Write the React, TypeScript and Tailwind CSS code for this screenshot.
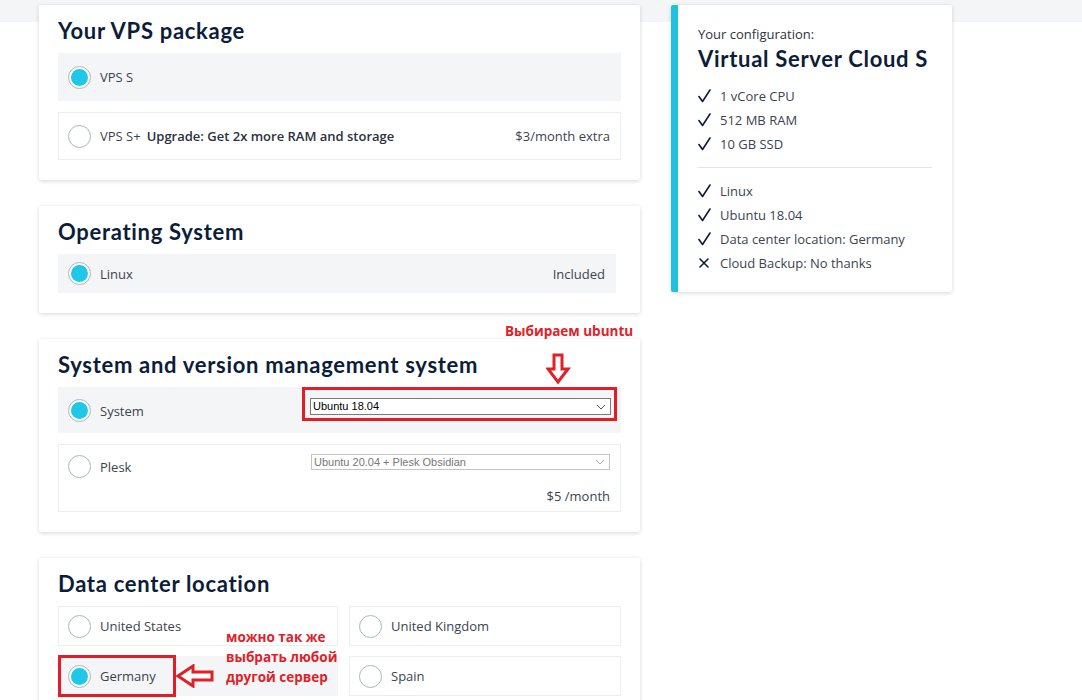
import React from "react";

type RadioProps = { checked?: boolean };

function Radio({ checked }: RadioProps) {
  return (
    <span className="flex h-[23px] w-[23px] shrink-0 items-center justify-center rounded-full border border-[#aab5c3] bg-white">
      {checked && <span className="h-[17px] w-[17px] rounded-full bg-[#1ec8e6]" />}
    </span>
  );
}

function Chevron({ color }: { color: string }) {
  return (
    <svg width="10" height="6" viewBox="0 0 10 6" fill="none">
      <path d="M1 1 L5 5 L9 1" stroke={color} strokeWidth="1" />
    </svg>
  );
}

function Check() {
  return (
    <svg width="13" height="14" viewBox="0 0 13 14" fill="none" className="shrink-0">
      <path d="M1 7.5 L4.5 12.5 L12 1" stroke="#0b1d3a" strokeWidth="1.6" strokeLinecap="round" strokeLinejoin="round" />
    </svg>
  );
}

function Cross() {
  return (
    <svg width="13" height="14" viewBox="0 0 13 14" fill="none" className="shrink-0">
      <path d="M2 3 L10 11 M10 3 L2 11" stroke="#0b1d3a" strokeWidth="1.6" strokeLinecap="round" />
    </svg>
  );
}

function Card({ title, children, className = "" }: { title: string; children: React.ReactNode; className?: string }) {
  return (
    <section className={`relative rounded-[2px] bg-white px-[19px] pt-[12px] pb-[20px] shadow-[0_1px_4px_rgba(0,0,0,0.16)] ${className}`}>
      <h2 className="h-[28px] font-['Lato',sans-serif] text-[22px] leading-[28px] font-bold tracking-[0.7px] text-[#0b1d3a]">{title}</h2>
      <div className="mt-[8px]">{children}</div>
    </section>
  );
}

const configMain = ["1 vCore CPU", "512 MB RAM", "10 GB SSD"];
const configExtra = ["Linux", "Ubuntu 18.04", "Data center location: Germany"];

export default function App() {
  return (
    <div className="min-h-[700px] bg-[linear-gradient(#f4f5f7_22px,#ffffff_22px)] font-['Open_Sans',sans-serif] text-[13px] text-[#3b4350]">
      <div className="flex items-start pt-[5px] pl-[39px]">
        {/* left column */}
        <div className="flex w-[601px] flex-col gap-[26px]">
          <Card title="Your VPS package">
            <div className="flex flex-col gap-[11px]">
              <div className="flex h-[48px] items-center gap-[9px] bg-[#f4f5f7] pl-[10px]">
                <Radio checked />
                <span className="pt-[2px]">VPS S</span>
              </div>
              <div className="flex h-[48px] items-center border border-[#eceef1] pr-[10px] pl-[9px]">
                <Radio />
                <span className="ml-[9px] pt-[2px]">VPS S+</span>
                <span className="ml-[6px] pt-[2px] font-semibold text-[#2a3140]">Upgrade: Get 2x more RAM and storage</span>
                <span className="ml-auto pt-[2px]">$3/month extra</span>
              </div>
            </div>
          </Card>

          <Card title="Operating System" className="pr-[24px]">
            <div className="flex h-[39px] items-center gap-[9px] bg-[#f4f5f7] pr-[11px] pl-[10px]">
              <Radio checked />
              <span className="pt-[2px]">Linux</span>
              <span className="ml-auto pt-[2px]">Included</span>
            </div>
          </Card>

          <Card title="System and version management system">
            <div className="flex flex-col gap-[11px]">
              <div className="relative flex h-[46px] bg-[#f4f5f7] pr-[10px] pl-[10px]">
                <div className="flex items-center gap-[9px] self-center pt-[1px]">
                  <Radio checked />
                  <span className="pt-[2px]">System</span>
                </div>
                <div className="mt-[11px] ml-auto flex h-[17px] w-[301px] items-center justify-between border border-[#7a7a7a] bg-white pr-[4px] pl-[2px] font-['Liberation_Sans',sans-serif] text-[11px] text-black">
                  <span>Ubuntu 18.04</span>
                  <Chevron color="#555" />
                </div>
                <div className="absolute top-0 left-[244px] h-[34px] w-[315px] border-[3px] border-[#e21d26]" />
              </div>
              <div className="flex h-[68px] flex-col border border-[#eceef1] pr-[10px] pl-[9px]">
                <div className="flex items-start">
                  <div className="mt-[10px] flex items-center gap-[9px]">
                    <Radio />
                    <span className="pt-[2px]">Plesk</span>
                  </div>
                  <div className="mt-[9px] ml-auto flex h-[16px] w-[299px] items-center justify-between border border-[#c4c4c4] bg-white pr-[4px] pl-[2px] font-['Liberation_Sans',sans-serif] text-[11px] text-[#777]">
                    <span>Ubuntu 20.04 + Plesk Obsidian</span>
                    <Chevron color="#aaa" />
                  </div>
                </div>
                <span className="mt-[9px] self-end">$5 /month</span>
              </div>
            </div>
            {/* annotation */}
            <div className="absolute top-[-17px] left-[466px] text-[13.5px] leading-[18px] font-bold whitespace-nowrap text-[#e02128]">
              Выбираем ubuntu
            </div>
            <svg className="absolute top-[14px] left-[507px]" width="26" height="32" viewBox="0 0 26 32" fill="none">
              <path d="M8 2 H16 V16 H22 L12 29 L2 16 H8 Z" fill="#fff" stroke="#e02128" strokeWidth="3" strokeLinejoin="miter" />
            </svg>
          </Card>

          <Card title="Data center location">
            <div className="relative grid grid-cols-[280px_1fr] gap-x-[11px] gap-y-[10px]">
              <div className="flex h-[40px] items-center gap-[9px] border border-[#eceef1] pl-[9px]">
                <Radio />
                <span className="pt-[2px]">United States</span>
              </div>
              <div className="flex h-[40px] items-center gap-[9px] border border-[#eceef1] pl-[9px]">
                <Radio />
                <span className="pt-[2px]">United Kingdom</span>
              </div>
              <div className="relative flex h-[40px] items-center gap-[9px] bg-[#f4f5f7] pl-[10px]">
                <Radio checked />
                <span className="pt-[2px]">Germany</span>
                <div className="absolute top-[-1px] left-0 h-[42px] w-[118px] border-[3px] border-[#e21d26]" />
              </div>
              <div className="flex h-[40px] items-center gap-[9px] border border-[#eceef1] pl-[9px]">
                <Radio />
                <span className="pt-[2px]">Spain</span>
              </div>
              {/* annotation */}
              <div className="absolute top-[21px] left-[168px] text-[13.5px] leading-[20px] font-bold text-[#e02128]">
                можно так же
                <br />
                выбрать любой
                <br />
                другой сервер
              </div>
              <svg className="absolute top-[58px] left-[118px]" width="38" height="24" viewBox="0 0 38 24" fill="none">
                <path d="M36 8 V16 H17 V22 L2 12 L17 2 V8 Z" fill="#fff" stroke="#e02128" strokeWidth="3" strokeLinejoin="miter" />
              </svg>
            </div>
            <div className="h-[20px]" />
          </Card>
        </div>

        {/* right column */}
        <aside className="ml-[31px] w-[281px] rounded-[2px] border-l-[7px] border-[#1ec2de] bg-white pt-[20px] pr-[20px] pb-[17px] pl-[20px] shadow-[0_1px_4px_rgba(0,0,0,0.16)]">
          <p className="text-[13px] leading-[18px] text-[#2c3440]">Your configuration:</p>
          <h3 className="mt-[2px] font-['Lato',sans-serif] text-[22px] leading-[28px] font-bold tracking-[0.7px] text-[#0b1d3a]">
            Virtual Server Cloud S
          </h3>
          <ul className="mt-[11px]">
            {configMain.map((item) => (
              <li key={item} className="flex h-[24px] items-center gap-[9px]">
                <Check />
                <span className="pt-[2px]">{item}</span>
              </li>
            ))}
          </ul>
          <div className="my-[11px] h-px bg-[#e1e4e8]" />
          <ul>
            {configExtra.map((item) => (
              <li key={item} className="flex h-[24px] items-center gap-[9px]">
                <Check />
                <span className="pt-[2px]">{item}</span>
              </li>
            ))}
            <li className="flex h-[24px] items-center gap-[9px]">
              <Cross />
              <span className="pt-[2px]">Cloud Backup: No thanks</span>
            </li>
          </ul>
        </aside>
      </div>
    </div>
  );
}
